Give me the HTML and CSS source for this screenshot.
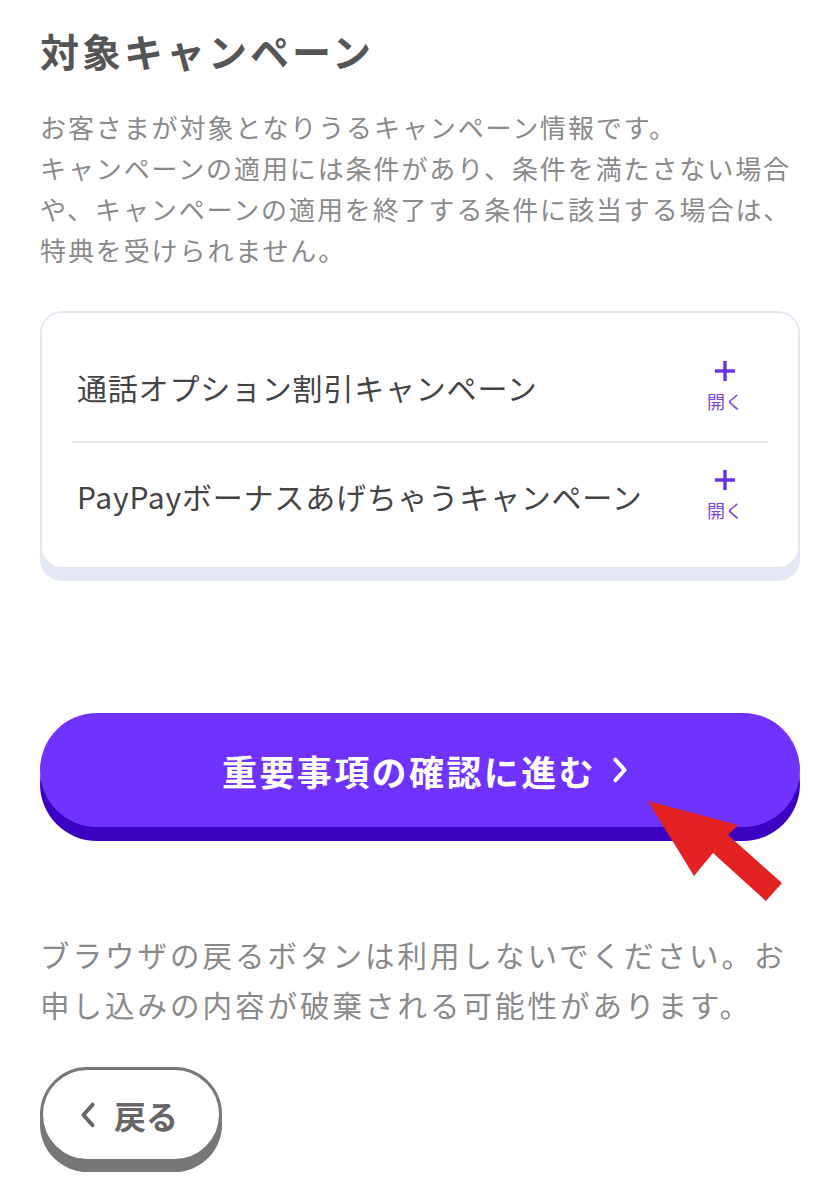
FILE: index.html
```html
<!DOCTYPE html>
<html lang="ja">
<head>
  <meta charset="UTF-8" />
  <title>対象キャンペーン</title>
  <meta name="viewport" content="width=device-width, initial-scale=1.0" />
  <link rel="stylesheet" href="styles.css">
</head>
<body>
  <main class="page">
    <h1 class="title">対象キャンペーン</h1>
    <p class="lead">お客さまが対象となりうるキャンペーン情報です。<br>キャンペーンの適用には条件があり、条件を満たさない場合や、キャンペーンの適用を終了する条件に該当する場合は、特典を受けられません。</p>

    <!-- キャンペーン一覧 -->
    <div class="campaigns">
      <div class="campaign">
        <span class="campaign-name">通話オプション割引キャンペーン</span>
        <button class="toggle">
          <svg viewBox="0 0 24 24"><line x1="12" y1="1" x2="12" y2="23"/><line x1="1" y1="12" x2="23" y2="12"/></svg>
          <span>開く</span>
        </button>
      </div>
      <div class="campaign">
        <span class="campaign-name">PayPayボーナスあげちゃうキャンペーン</span>
        <button class="toggle">
          <svg viewBox="0 0 24 24"><line x1="12" y1="1" x2="12" y2="23"/><line x1="1" y1="12" x2="23" y2="12"/></svg>
          <span>開く</span>
        </button>
      </div>
    </div>

    <div class="next-wrap">
      <button class="next-btn">
        重要事項の確認に進む
        <svg viewBox="0 0 14 24"><polyline points="3,3 11,12 3,21"/></svg>
      </button>
      <!-- 矢印 -->
      <svg class="pointer" viewBox="0 0 200 120"><polygon points="8,8 98,32 88,42 142,90 126,108 73,60 54,83"/></svg>
    </div>

    <p class="note">ブラウザの戻るボタンは利用しないでください。お申し込みの内容が破棄される可能性があります。</p>

    <button class="back-btn">
      <svg viewBox="0 0 14 24"><polyline points="11,3 3,12 11,21"/></svg>
      戻る
    </button>
  </main>
</body>
</html>
```

FILE: styles.css
```css
* { box-sizing: border-box; margin: 0; padding: 0; }

body {
  font-family: "Noto Sans CJK JP", "Noto Sans", sans-serif;
  background: #fff;
  color: #444;
}

.page {
  padding: 22px 35px 40px 40px;
}

.title {
  font-size: 39px;
  line-height: 56px;
  font-weight: 700;
  color: #555;
  letter-spacing: 3px;
}

.lead {
  margin-top: 28px;
  font-size: 26px;
  line-height: 41px;
  letter-spacing: 1.9px;
  color: #8a8a8a;
}

.campaigns {
  margin-top: 41px;
  border: 2px solid #e3e8f3;
  border-radius: 22px;
  box-shadow: 0 12px 0 #e3e8f4;
  padding: 20px 30px 18px;
  background: #fff;
}

.campaign {
  display: flex;
  align-items: center;
  justify-content: space-between;
  height: 108px;
  padding: 0 13px 0 5px;
}

.campaign + .campaign {
  border-top: 2px solid #e9e9ef;
  height: 108px;
}

.campaign-name {
  font-size: 30px;
  color: #444;
  letter-spacing: 0.8px;
}

.toggle {
  background: none;
  border: none;
  display: flex;
  flex-direction: column;
  align-items: center;
  gap: 9px;
  width: 60px;
  color: #7a48dc;
  font-family: inherit;
  font-size: 18px;
  line-height: 20px;
  margin-top: -4px;
}

.toggle svg {
  width: 22px;
  height: 22px;
  stroke: #6a35e6;
  stroke-width: 3.8;
}

.next-wrap {
  position: relative;
  margin-top: 144px;
}

.next-btn {
  width: 100%;
  height: 114px;
  border: none;
  border-radius: 57px;
  background: #7033ff;
  box-shadow: 0 14px 0 #3b02c2;
  color: #fff;
  font-family: inherit;
  font-size: 35px;
  font-weight: 700;
  letter-spacing: 2.4px;
  display: flex;
  align-items: center;
  justify-content: center;
  gap: 16px;
  padding-left: 10px;
}

.next-btn svg {
  width: 16px;
  height: 28px;
  fill: none;
  stroke: #fff;
  stroke-width: 3.5;
  stroke-linecap: round;
  stroke-linejoin: round;
}

.pointer {
  position: absolute;
  left: 600px;
  top: 80px;
  width: 200px;
  height: 120px;
  fill: #e42222;
}

.note {
  margin-top: 102px;
  font-size: 29.5px;
  line-height: 50px;
  letter-spacing: 3px;
  color: #8a8a8a;
}

.back-btn {
  margin-top: 38px;
  width: 182px;
  height: 95px;
  border: 3px solid #777;
  border-radius: 48px;
  background: #fff;
  box-shadow: 0 10px 0 #777;
  color: #666;
  font-family: inherit;
  font-size: 32px;
  font-weight: 700;
  display: flex;
  align-items: center;
  justify-content: center;
  gap: 18px;
  padding-right: 4px;
}

.back-btn svg {
  width: 16px;
  height: 30px;
  fill: none;
  stroke: #666;
  stroke-width: 3.5;
  stroke-linecap: round;
  stroke-linejoin: round;
}
```
